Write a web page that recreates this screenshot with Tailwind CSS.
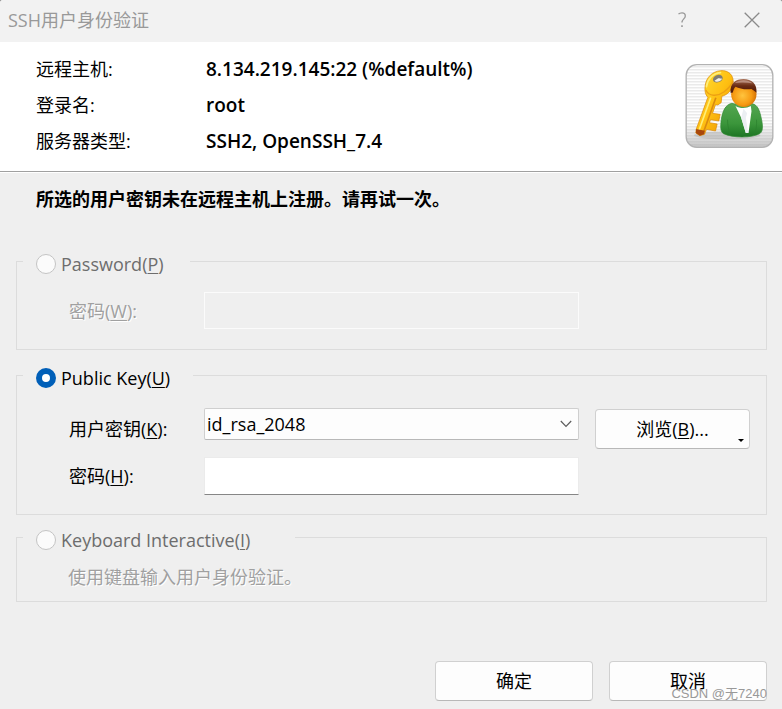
<!DOCTYPE html>
<html lang="zh-CN">
<head>
    <meta charset="utf-8"/>
    <meta content="width=device-width, initial-scale=1" name="viewport"/>
    <title>SSH用户身份验证</title>
    <script src="https://cdn.jsdelivr.net/npm/@tailwindcss/browser@4"></script>
</head>
<body class="bg-[#8a8a8a]">
    <div class="relative flex flex-col min-h-screen rounded-t-[3px] overflow-hidden bg-[#efefef] text-black text-[18px] leading-6 font-['Open_Sans','Noto_Sans_CJK_SC',sans-serif]">
        <!-- Title bar -->
        <header class="flex items-center justify-between h-[42px] pl-2 pr-[22px] pb-[2px] bg-[#f2f2f2] text-[#999999]">
            <h1>SSH用户身份验证</h1>
            <div class="flex items-center gap-14">
                <button type="button" aria-label="Help" class="flex">
                    <svg class="w-3 h-4" viewBox="0 0 12 16" fill="none" stroke="currentColor" stroke-width="1.3">
                        <path d="M2.5 2.2C3.3 1.2 4.6 .8 6 .8c2.2 0 3.3 1.1 3.3 3.1C9.3 6.8 6 7 6 10.5"/>
                        <path d="M6 13.2v1.8" stroke-width="1.6"/>
                    </svg>
                </button>
                <button type="button" aria-label="Close" class="flex">
                    <svg class="w-4 h-4" viewBox="0 0 16 16" fill="none" stroke="#8a8a8a" stroke-width="1.3">
                        <path d="M.7.7l14.6 14.6M15.3.7L.7 15.3"/>
                    </svg>
                </button>
            </div>
        </header>

        <!-- Connection info -->
        <section class="flex justify-between pl-9 pr-2 pt-[9px] pb-3 bg-white border-b border-[#a0a0a0]">
            <dl class="grid grid-cols-[170px_auto] auto-rows-[36px] items-center">
                <dt>远程主机:</dt>
                <dd class="text-[19px] font-semibold">8.134.219.145:22 (%default%)</dd>
                <dt>登录名:</dt>
                <dd class="text-[19px] font-semibold">root</dd>
                <dt>服务器类型:</dt>
                <dd class="text-[19px] font-semibold">SSH2, OpenSSH_7.4</dd>
            </dl>
            <svg class="w-[89px] h-[84px] mt-[13px] shrink-0" viewBox="45 42 264 252" aria-hidden="true">
                <defs>
                    <pattern id="lines" width="12" height="9" y="49" patternUnits="userSpaceOnUse">
                        <rect width="12" height="9" fill="#fefefe"/>
                        <rect width="12" height="3" fill="#e0e0e0"/>
                    </pattern>
                    <linearGradient id="shade" x1="0" y1="0" x2="0" y2="1">
                        <stop offset="0.7" stop-color="#bbb" stop-opacity="0"/>
                        <stop offset="1" stop-color="#aaa" stop-opacity="0.7"/>
                    </linearGradient>
                    <linearGradient id="gold" x1="0" y1="0" x2="1" y2="1">
                        <stop offset="0" stop-color="#ffe23a"/>
                        <stop offset="0.5" stop-color="#ffc012"/>
                        <stop offset="1" stop-color="#e58a00"/>
                    </linearGradient>
                    <radialGradient id="face" cx="0.45" cy="0.55" r="0.6">
                        <stop offset="0" stop-color="#ffc43e"/>
                        <stop offset="0.6" stop-color="#f69a12"/>
                        <stop offset="1" stop-color="#c96500"/>
                    </radialGradient>
                    <linearGradient id="hair" x1="0" y1="0" x2="0" y2="1">
                        <stop offset="0" stop-color="#a9745c"/>
                        <stop offset="0.5" stop-color="#6b2c14"/>
                        <stop offset="1" stop-color="#4a1606"/>
                    </linearGradient>
                    <linearGradient id="coat" x1="0" y1="0" x2="0" y2="1">
                        <stop offset="0" stop-color="#55a651"/>
                        <stop offset="0.6" stop-color="#3b963b"/>
                        <stop offset="1" stop-color="#1d7423"/>
                    </linearGradient>
                </defs>
                <rect x="47" y="44" width="260" height="248" rx="32" fill="url(#lines)"/>
                <rect x="47" y="44" width="260" height="248" rx="32" fill="url(#shade)" stroke="#b2b2b2" stroke-width="4"/>
                <ellipse cx="170" cy="256" rx="100" ry="12" fill="#888" opacity="0.25"/>
                <!-- Key -->
                <path d="M150 62C175 60 190 76 188 99C186 120 172 134 154 139L152 158L142 165L135 164L126 190L149 193L145 213L120 209L117 218L140 222L135 243L108 238L102 253L88 257L76 249L77 238L112 142C104 134 102 121 104 107C107 82 126 64 150 62Z" fill="url(#gold)" stroke="#d98605" stroke-width="2"/>
                <path d="M120 145L86 240M108 110C110 90 126 70 150 68" fill="none" stroke="#ffee78" stroke-width="5" stroke-linecap="round"/>
                <path d="M136 143L100 244" fill="none" stroke="#d98a10" stroke-width="5"/>
                <path d="M106 120C115 140 141 140 160 126C174 115 184 106 187 93" fill="none" stroke="#eda013" stroke-width="4"/>
                <path d="M77 237L103 242L101 253L88 257L76 249Z" fill="#a8470c"/>
                <ellipse cx="142" cy="86" rx="15" ry="11" fill="#807c72" transform="rotate(-20 142 86)"/>
                <path d="M132 92C136 97 150 96 155 86C149 86 146 84 143 85Z" fill="#f1efe8"/>
                <!-- User -->
                <path d="M184 160C164 164 156 184 152 211C150 229 149 245 159 251C187 264 244 265 269 250C280 242 276 218 270 195C265 174 258 162 240 160C220 165 202 165 184 160Z" fill="url(#coat)" stroke="#328a34" stroke-width="2"/>
                <path d="M195 168C210 177 229 175 241 168L243 184L234 249H226L212 203Z" fill="#fff"/>
                <path d="M219 176L230 190L226 203L233 249H226L212 203Z" fill="#eceff3"/>
                <path d="M171 209C171 228 175 241 180 254M258 209C259 227 257 240 252 252" fill="none" stroke="#2a802d" stroke-width="2"/>
                <ellipse cx="220" cy="133" rx="38" ry="38" fill="url(#face)"/>
                <path d="M180 128C178 100 196 87 219 87C244 87 260 102 258 128C252 124 247 119 243 117C224 120 206 115 195 110C190 114 189 122 186 128Z" fill="url(#hair)"/>
                <path d="M193 99C207 88 232 88 246 100C229 97 210 96 193 99Z" fill="#d0aa9c" opacity="0.65"/>
            </svg>
        </section>

        <form class="flex flex-col grow px-[15px] pb-2 pl-4 border-t border-white">
            <p class="pl-5 pt-[14px] pb-[37px] font-bold">所选的用户密钥未在远程主机上注册。请再试一次。</p>

            <fieldset class="border border-[#dcdcdc] pl-[52px] pr-4 pb-5">
                <legend class="h-[26px] -ml-[46px] pl-[13px] pr-[26px] pt-[6px]">
                    <label class="flex items-center gap-[5px] h-5 text-[#6d6d6d]">
                        <input type="radio" name="method" disabled class="appearance-none w-5 h-5 rounded-full border border-[#c4c4c4] bg-[#fbfbfb]">
                        <span>Password(<u class="underline-offset-2">P</u>)</span>
                    </label>
                </legend>
                <div class="grid grid-cols-[119px_1fr_155px] gap-4 items-center pt-[18px]">
                    <label for="password" class="text-[#a0a0a0] [text-shadow:1px_1px_0_#fff]">密码(<u class="underline-offset-2">W</u>):</label>
                    <input id="password" type="password" disabled class="w-full h-[37px] px-1 border border-[#fbfbfb] bg-[#efefef]">
                </div>
            </fieldset>

            <fieldset class="border border-[#dcdcdc] mt-3 pl-[52px] pr-4 pb-[19px]">
                <legend class="h-[26px] -ml-[46px] pl-[13px] pr-[23px] pt-[6px]">
                    <label class="flex items-center gap-[5px] h-5">
                        <input type="radio" name="method" checked class="appearance-none w-5 h-5 rounded-full border-[6px] border-[#005fb8] bg-white">
                        <span>Public Key(<u class="underline-offset-2">U</u>)</span>
                    </label>
                </legend>
                <div class="grid grid-cols-[119px_1fr_155px] grid-rows-[41px_38px] gap-x-4 gap-y-2 items-center pt-5">
                    <label for="user-key">用户密钥(<u class="underline-offset-2">K</u>):</label>
                    <div class="relative self-start">
                        <select id="user-key" class="appearance-none block w-full h-8 pl-[2px] pr-8 rounded-[2px] border border-[#cfcfcf] border-b-[#b8b8b8] bg-[#fdfdfd]">
                            <option>id_rsa_2048</option>
                        </select>
                        <svg class="absolute right-[7px] top-3 w-3 h-2 pointer-events-none" viewBox="0 0 12 8" fill="none" stroke="#5c5c5c" stroke-width="1.2">
                            <path d="M.8 1L6 6.3 11.2 1"/>
                        </svg>
                    </div>
                    <button type="button" class="relative self-end h-10 rounded-[4px] border border-[#d0d0d0] border-b-[#b8b8b8] bg-[#fdfdfd]">
                        浏览(<u class="underline-offset-2">B</u>)...
                        <svg class="absolute right-[5px] bottom-[6px] w-[6px] h-[3px]" viewBox="0 0 6 3"><path d="M0 0h6L3 3z"/></svg>
                    </button>
                    <label for="passphrase">密码(<u class="underline-offset-2">H</u>):</label>
                    <input id="passphrase" type="password" class="w-full h-[38px] px-1 border border-[#ebebeb] border-b-[#868686] bg-white">
                </div>
            </fieldset>

            <fieldset class="border border-[#dcdcdc] mt-[9px] pl-[51px] pr-4 pb-3">
                <legend class="h-[26px] -ml-[45px] pl-[13px] pr-[45px] pt-[6px]">
                    <label class="flex items-center gap-[5px] h-5 text-[#6d6d6d]">
                        <input type="radio" name="method" disabled class="appearance-none w-5 h-5 rounded-full border border-[#c4c4c4] bg-[#fbfbfb]">
                        <span>Keyboard Interactive(<u class="underline-offset-2">I</u>)</span>
                    </label>
                </legend>
                <p class="pt-[15px] text-[#a0a0a0] [text-shadow:1px_1px_0_#fff]">使用键盘输入用户身份验证。</p>
            </fieldset>

            <div class="flex justify-end gap-4 mt-auto pt-8">
                <button type="submit" class="w-[158px] h-10 rounded-[4px] border border-[#d0d0d0] border-b-[#b8b8b8] bg-[#fdfdfd]">确定</button>
                <button type="button" class="w-[158px] h-10 rounded-[4px] border border-[#d0d0d0] border-b-[#b8b8b8] bg-[#fdfdfd]">取消</button>
            </div>
        </form>

        <span class="absolute right-[15px] bottom-[5px] text-[13px] leading-5 text-[#999999] pointer-events-none font-['Liberation_Sans','Noto_Sans_CJK_SC',sans-serif]">CSDN @无7240</span>
    </div>
</body>
</html>
